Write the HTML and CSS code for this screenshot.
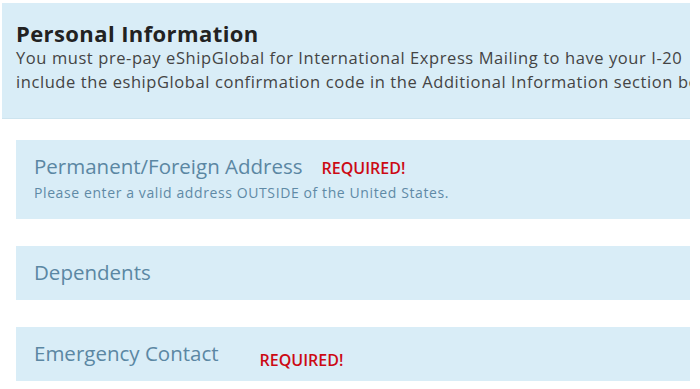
FILE: index.html
```html
<!DOCTYPE html>
<html lang="en">
<head>
<meta charset="utf-8">
<title>Personal Information</title>
<link rel="stylesheet" href="styles.css">
</head>
<body>
<div class="page">
  <section class="intro">
    <h1 class="intro-title">Personal Information</h1>
    <p class="intro-text">You must pre-pay eShipGlobal for International Express Mailing to have your I-20<br>include the eshipGlobal confirmation code in the Additional Information section below.</p>
  </section>
  <div class="cards">
    <section class="card card-tall">
      <div class="card-head">
        <h2 class="card-title">Permanent/Foreign Address</h2>
        <span class="required">REQUIRED!</span>
      </div>
      <p class="card-note">Please enter a valid address OUTSIDE of the United States.</p>
    </section>
    <section class="card">
      <div class="card-head">
        <h2 class="card-title">Dependents</h2>
      </div>
    </section>
    <section class="card">
      <div class="card-head">
        <h2 class="card-title">Emergency Contact</h2>
        <span class="required required-low">REQUIRED!</span>
      </div>
    </section>
  </div>
</div>
</body>
</html>
```

FILE: styles.css
```css
html, body {
  margin: 0;
  padding: 0;
  background: #ffffff;
}

body {
  font-family: "Open Sans", "Liberation Sans", sans-serif;
  width: 700px;
  height: 389px;
  overflow: hidden;
}

.page {
  padding: 3px 10px 0 2px;
}

.intro {
  background: #d9edf7;
  height: 116px;
  box-sizing: border-box;
  padding: 18px 0 0 14px;
  overflow: hidden;
  border-bottom: 1px solid #cde4ef;
}

.intro-title {
  margin: 0;
  font-size: 22px;
  line-height: 24px;
  letter-spacing: 0.4px;
  font-weight: 700;
  color: #222222;
}

.intro-text {
  margin: 1px 0 0;
  font-size: 16.5px;
  line-height: 24px;
  letter-spacing: 0.58px;
  color: #444444;
  white-space: nowrap;
}

.cards {
  margin: 21px 0 0 14px;
  display: flex;
  flex-direction: column;
  gap: 27px;
}

.card {
  background: #d9edf7;
  padding: 12px 18px 12px 18px;
  height: 54px;
  box-sizing: border-box;
}

.card-tall {
  height: 79px;
}

.card-head {
  display: flex;
  align-items: baseline;
}

.card-title {
  margin: 0;
  font-size: 20.5px;
  line-height: 28px;
  font-weight: 400;
  color: #5b87a3;
}

.required {
  margin-left: 19px;
  font-size: 16px;
  font-weight: 600;
  color: #cc0a14;
}

.required-low {
  margin-left: 41px;
  position: relative;
  top: 5px;
}

.card-note {
  margin: 3px 0 0;
  font-size: 14px;
  line-height: 20px;
  letter-spacing: 0.6px;
  color: #5f8aa6;
}
```
